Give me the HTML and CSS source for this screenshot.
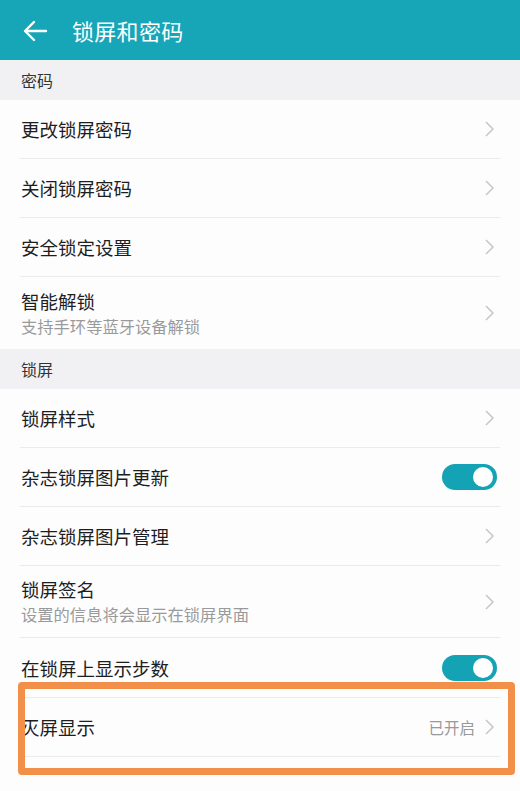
FILE: index.html
```html
<!DOCTYPE html>
<html lang="zh-CN">
<head>
<meta charset="utf-8">
<link rel="stylesheet" href="styles.css">
</head>
<body>
<div class="screen">
  <header class="appbar">
    <svg class="back" width="26" height="22" viewBox="0 0 26 22"><path d="M24 11H3M12 2L3 11l9 9" fill="none" stroke="#fff" stroke-width="2.4" stroke-linecap="round" stroke-linejoin="round"/></svg>
    <span class="title">锁屏和密码</span>
  </header>

  <div class="section-head">密码</div>
  <div class="list">
    <div class="row"><div class="inner"><div class="text"><div class="label">更改锁屏密码</div></div><svg class="chev" width="9" height="16" viewBox="0 0 9 16"><path d="M1 1l7 7-7 7" fill="none" stroke="#c6c6c6" stroke-width="1.5"/></svg></div></div>
    <div class="row"><div class="inner"><div class="text"><div class="label">关闭锁屏密码</div></div><svg class="chev" width="9" height="16" viewBox="0 0 9 16"><path d="M1 1l7 7-7 7" fill="none" stroke="#c6c6c6" stroke-width="1.5"/></svg></div></div>
    <div class="row"><div class="inner"><div class="text"><div class="label">安全锁定设置</div></div><svg class="chev" width="9" height="16" viewBox="0 0 9 16"><path d="M1 1l7 7-7 7" fill="none" stroke="#c6c6c6" stroke-width="1.5"/></svg></div></div>
    <div class="row tall last"><div class="inner"><div class="text"><div class="label">智能解锁</div><div class="sub">支持手环等蓝牙设备解锁</div></div><svg class="chev" width="9" height="16" viewBox="0 0 9 16"><path d="M1 1l7 7-7 7" fill="none" stroke="#c6c6c6" stroke-width="1.5"/></svg></div></div>
  </div>

  <div class="section-head">锁屏</div>
  <div class="list">
    <div class="row"><div class="inner"><div class="text"><div class="label">锁屏样式</div></div><svg class="chev" width="9" height="16" viewBox="0 0 9 16"><path d="M1 1l7 7-7 7" fill="none" stroke="#c6c6c6" stroke-width="1.5"/></svg></div></div>
    <div class="row"><div class="inner"><div class="text"><div class="label">杂志锁屏图片更新</div></div><span class="toggle"><span class="knob"></span></span></div></div>
    <div class="row"><div class="inner"><div class="text"><div class="label">杂志锁屏图片管理</div></div><svg class="chev" width="9" height="16" viewBox="0 0 9 16"><path d="M1 1l7 7-7 7" fill="none" stroke="#c6c6c6" stroke-width="1.5"/></svg></div></div>
    <div class="row tall"><div class="inner"><div class="text"><div class="label">锁屏签名</div><div class="sub">设置的信息将会显示在锁屏界面</div></div><svg class="chev" width="9" height="16" viewBox="0 0 9 16"><path d="M1 1l7 7-7 7" fill="none" stroke="#c6c6c6" stroke-width="1.5"/></svg></div></div>
    <div class="row steps"><div class="inner"><div class="text"><div class="label">在锁屏上显示步数</div></div><span class="toggle"><span class="knob"></span></span></div></div>
    <div class="row"><div class="inner"><div class="text"><div class="label">灭屏显示</div></div><span class="value">已开启</span><svg class="chev" width="9" height="16" viewBox="0 0 9 16"><path d="M1 1l7 7-7 7" fill="none" stroke="#c6c6c6" stroke-width="1.5"/></svg></div></div>
  </div>

  <div class="highlight"></div>
</div>
</body>
</html>
```

FILE: styles.css
```css
* { box-sizing: border-box; }
html, body { margin: 0; padding: 0; }
body {
  width: 520px;
  height: 791px;
  overflow: hidden;
  background: #fdfdfe;
  font-family: "Noto Sans CJK SC", "Noto Sans", sans-serif;
  color: #1e1e1e;
}
.screen { position: relative; width: 520px; height: 791px; background: #fdfdfe; }
.appbar {
  height: 60px;
  background: #16a6b8;
  display: flex;
  align-items: center;
  padding-left: 22px;
}
.back { display: block; margin-top: 1px; }
.title {
  color: #fff;
  font-size: 22px;
  margin-left: 24px;
  letter-spacing: 0.3px;
}
.section-head {
  height: 40px;
  background: #f1f1f3;
  display: flex;
  align-items: center;
  padding-left: 21px;
  font-size: 16px;
  color: #333;
}
.list { background: #fdfdfe; }
.row { padding: 0 20px; }
.inner {
  height: 59px;
  display: flex;
  align-items: center;
  border-bottom: 1px solid #ebebed;
}
.row.tall .inner { height: 72px; }
.row.steps .inner { height: 60px; }
.row.last .inner { border-bottom: none; }
.text { flex: 1; padding-left: 1px; }
.label { font-size: 18.5px; line-height: 24px; color: #1e1e1e; }
.sub { font-size: 16.3px; line-height: 22px; color: #9a9a9a; margin-top: 2px; }
.row.tall .label { margin-top: -1px; }
.chev { display: block; margin-right: 6px; }
.value { font-size: 15.5px; color: #999; margin-right: 10px; }
.toggle {
  width: 55px;
  height: 26px;
  border-radius: 13px;
  background: #13a3b4;
  margin-right: 3px;
  position: relative;
  display: block;
}
.knob {
  position: absolute;
  right: 4px;
  top: 3px;
  width: 20px;
  height: 20px;
  border-radius: 50%;
  background: #fff;
}
.highlight {
  position: absolute;
  left: 18px;
  top: 682px;
  width: 497px;
  height: 93px;
  border: 7px solid #f28f48;
  border-radius: 4px;
}
```
